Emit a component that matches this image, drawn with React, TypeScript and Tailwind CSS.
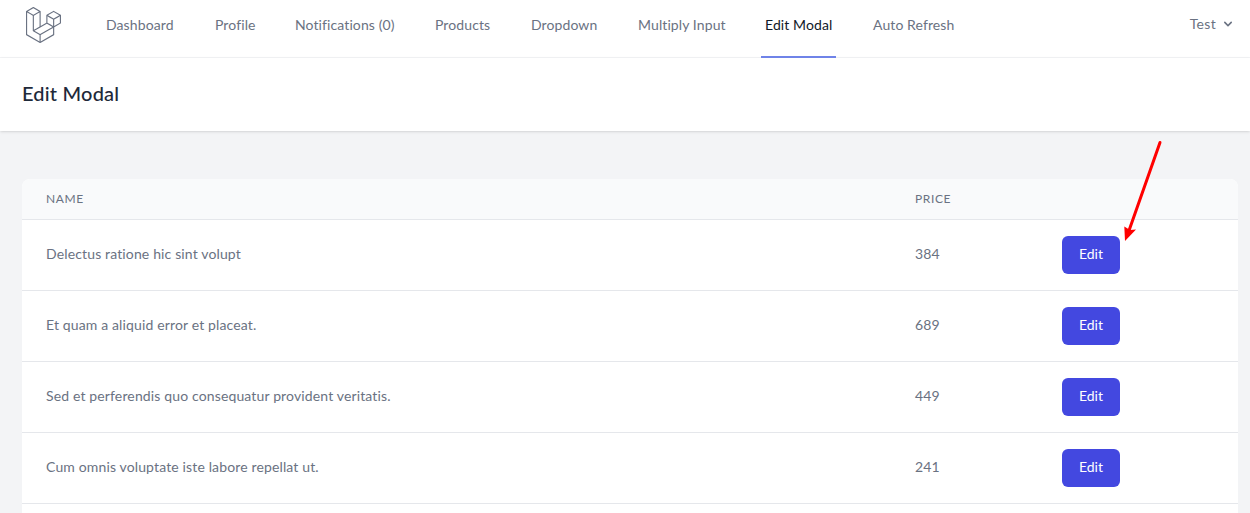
const font = "font-['Lato','Noto_Sans',sans-serif]";

const navLinks = [
  { label: 'Dashboard', width: 'w-[109px]' },
  { label: 'Profile', width: 'w-[80px]' },
  { label: 'Notifications (0)', width: 'w-[140px]' },
  { label: 'Products', width: 'w-[96px]' },
  { label: 'Dropdown', width: 'w-[107px]' },
  { label: 'Multiply Input', width: 'w-[127px]' },
  { label: 'Edit Modal', width: 'w-[108px]', active: true },
  { label: 'Auto Refresh', width: 'w-[100px]' },
];

const products = [
  { name: 'Delectus ratione hic sint volupt', price: 384 },
  { name: 'Et quam a aliquid error et placeat.', price: 689 },
  { name: 'Sed et perferendis quo consequatur provident veritatis.', price: 449 },
  { name: 'Cum omnis voluptate iste labore repellat ut.', price: 241 },
];

function Logo() {
  return (
    <svg viewBox="35 18 271 279" className="h-9 w-[35px] fill-current text-gray-500">
      <path d="M305.8 81.125C305.77 80.995 305.69 80.885 305.65 80.755C305.56 80.525 305.49 80.285 305.37 80.075C305.29 79.935 305.17 79.815 305.07 79.685C304.94 79.515 304.83 79.325 304.68 79.175C304.55 79.045 304.39 78.955 304.25 78.845C304.09 78.715 303.95 78.575 303.77 78.475L251.32 48.275C249.97 47.495 248.31 47.495 246.96 48.275L194.51 78.475C194.33 78.575 194.19 78.725 194.03 78.845C193.89 78.955 193.73 79.045 193.6 79.175C193.45 79.325 193.34 79.515 193.21 79.685C193.11 79.815 192.99 79.935 192.91 80.075C192.79 80.285 192.71 80.525 192.63 80.755C192.58 80.875 192.51 80.995 192.48 81.125C192.38 81.495 192.33 81.875 192.33 82.265V139.625L148.62 164.795V52.575C148.62 52.185 148.57 51.805 148.47 51.435C148.44 51.305 148.36 51.195 148.32 51.065C148.23 50.835 148.16 50.595 148.04 50.385C147.96 50.245 147.84 50.125 147.74 49.995C147.61 49.825 147.5 49.635 147.35 49.485C147.22 49.355 147.06 49.265 146.92 49.155C146.76 49.025 146.62 48.885 146.44 48.785L93.99 18.585C92.64 17.805 90.98 17.805 89.63 18.585L37.18 48.785C37 48.885 36.86 49.035 36.7 49.155C36.56 49.265 36.4 49.355 36.27 49.485C36.12 49.635 36.01 49.825 35.88 49.995C35.78 50.125 35.66 50.245 35.58 50.385C35.46 50.595 35.38 50.835 35.3 51.065C35.25 51.185 35.18 51.305 35.15 51.435C35.05 51.805 35 52.185 35 52.575V232.235C35 233.795 35.84 235.245 37.19 236.025L142.1 296.425C142.33 296.555 142.58 296.635 142.83 296.725C142.95 296.765 143.06 296.835 143.18 296.865C143.55 296.965 143.93 297.015 144.31 297.015C144.69 297.015 145.07 296.965 145.44 296.865C145.55 296.835 145.65 296.775 145.76 296.735C146.02 296.645 146.28 296.565 146.52 296.425L251.43 236.025C252.79 235.245 253.62 233.805 253.62 232.235V174.885L303.88 145.945C305.24 145.165 306.07 143.725 306.07 142.155V82.265C306.07 81.875 306.02 81.495 305.92 81.125H305.8ZM144.2 227.205L100.57 202.515L146.39 176.135L196.66 147.195L240.33 172.335L208.29 190.625L144.2 227.205ZM244.75 114.995V164.795L226.39 154.225L201.03 139.625V89.825L219.39 100.395L244.75 114.995ZM249.12 57.105L292.81 82.265L249.12 107.425L205.43 82.265L249.12 57.105ZM114.49 184.425L96.13 194.995V85.305L121.49 70.705L139.85 60.135V169.815L114.49 184.425ZM91.76 27.425L135.45 52.585L91.76 77.745L48.07 52.585L91.76 27.425ZM43.67 60.135L62.03 70.705L87.39 85.305V202.545V202.555V202.565C87.39 202.735 87.44 202.895 87.46 203.055C87.49 203.265 87.49 203.485 87.55 203.695V203.705C87.6 203.875 87.69 204.035 87.76 204.195C87.84 204.375 87.89 204.575 87.99 204.745C87.99 204.745 87.99 204.755 88 204.755C88.09 204.905 88.22 205.035 88.33 205.175C88.45 205.335 88.55 205.495 88.69 205.635L88.7 205.645C88.82 205.765 88.98 205.855 89.12 205.965C89.28 206.085 89.42 206.225 89.59 206.325C89.6 206.325 89.6 206.325 89.61 206.335C89.62 206.335 89.62 206.345 89.63 206.345L139.87 234.775V285.065L43.67 229.705V60.135ZM244.75 229.705L148.58 285.075V234.775L219.8 194.115L244.75 179.875V229.705ZM297.2 139.625L253.49 164.795V114.995L278.85 100.395L297.21 89.825V139.625H297.2Z" />
    </svg>
  );
}

export default function App() {
  return (
    <div className={`relative h-[513px] w-[1250px] overflow-hidden bg-gray-100 ${font}`}>
      <nav className="flex h-[58px] border-b border-gray-100 bg-white">
        <div className="ml-[26px] mr-[41px] mt-[7px]">
          <Logo />
        </div>
        <div className="flex flex-1">
          {navLinks.map((link) => (
            <div key={link.label} className={`${link.width} flex h-[58px]`}>
              <a
                className={
                  link.active
                    ? 'inline-flex h-[58px] items-center border-b-2 border-[#6f83e8] px-1 pb-[6px] text-sm tracking-[0.1px] text-gray-900'
                    : 'inline-flex h-[58px] items-center border-b-2 border-transparent px-1 pb-[6px] text-sm tracking-[0.1px] text-gray-500'
                }
              >
                {link.label}
              </a>
            </div>
          ))}
        </div>
        <div className="mr-[14px] flex h-[47px] items-center text-sm tracking-[0.3px] text-gray-500">
          Test
          <svg viewBox="0 0 20 20" className="ml-1 h-4 w-4 fill-current">
            <path
              fillRule="evenodd"
              clipRule="evenodd"
              d="M5.293 7.293a1 1 0 011.414 0L10 10.586l3.293-3.293a1 1 0 111.414 1.414l-4 4a1 1 0 01-1.414 0l-4-4a1 1 0 010-1.414z"
            />
          </svg>
        </div>
      </nav>

      <header className="flex h-[73px] items-center bg-white px-[22px] pb-1 shadow">
        <h2 className="text-xl leading-7 font-medium tracking-[0.2px] text-gray-800">Edit Modal</h2>
      </header>

      <main className="h-full pt-12 pr-3 pl-[22px]">
        <div className="h-full rounded-lg bg-white">
          <table className="w-full table-fixed">
            <thead className="border-b border-gray-200">
              <tr className="h-10 text-left text-xs tracking-wider text-gray-500 uppercase">
                <th className="w-[869px] rounded-tl-lg bg-gray-50 pl-6 font-normal">Name</th>
                <th className="w-[147px] bg-gray-50 pl-6 font-normal">Price</th>
                <th className="rounded-tr-lg bg-gray-50"></th>
              </tr>
            </thead>
            <tbody className="text-sm text-gray-500">
              {products.map((product) => (
                <tr key={product.name} className="h-[71px] border-b border-gray-200">
                  <td className="pb-[2px] pl-6 tracking-[0.14px]">{product.name}</td>
                  <td className="pb-[2px] pl-6 tracking-[0.14px]">{product.price}</td>
                  <td className="pl-6">
                    <button className="h-[38px] w-[58px] rounded-md bg-[#4348e0] pb-[2px] text-sm text-white">Edit</button>
                  </td>
                </tr>
              ))}
            </tbody>
          </table>
        </div>
      </main>

      {/* annotation arrow drawn over the screenshot */}
      <svg className="absolute top-[135px] left-[1115px] h-[115px] w-[55px]" viewBox="1115 135 55 115">
        <path d="M1160 142.5 L1128.5 232" stroke="#ff0000" strokeWidth="3" strokeLinecap="round" fill="none" />
        <path d="M1125 241 L1124.3 226.5 L1130 230 L1136 229.5 Z" fill="#ff0000" />
      </svg>
    </div>
  );
}
